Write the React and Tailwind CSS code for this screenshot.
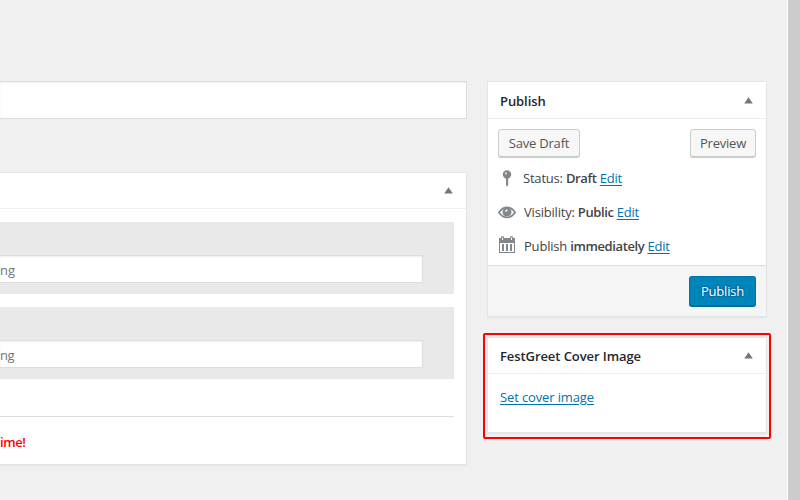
const box = "border border-[#e5e5e5] bg-white shadow-[0_1px_1px_rgba(0,0,0,0.04)]";
const input = "flex h-[28px] w-[423px] items-center border border-l-0 border-[#ddd] bg-white text-[13px] text-[#72777c] shadow-[inset_0_1px_2px_rgba(0,0,0,0.07)]";
const strong = "font-semibold tracking-[-0.4px]";

function Arrow() {
  return (
    <svg className="h-[7px] w-[9px]" viewBox="0 0 9 7" fill="#72777c">
      <path d="M4.5 0.3 8.8 6.4H.2Z" />
    </svg>
  );
}

function Head({ children, size }) {
  return (
    <div className={`flex items-center justify-between border-b border-[#eee] pr-[13px] pl-[12px] ${size}`}>
      <h2 className="mt-[1px] text-[13px] font-semibold tracking-[-0.08px] text-[#23282d]">{children}</h2>
      <Arrow />
    </div>
  );
}

function Pin() {
  return (
    <svg className="h-[17px] w-[17px]" viewBox="0 0 17 17" fill="#82878c">
      <circle cx="9" cy="4.5" r="4.2" />
      <path d="M8 8h2.2v6.2l-.7 2.3h-.8L8 14.2Z" />
      <circle cx="7.9" cy="3.4" r="1.1" fill="#d5d7d9" />
    </svg>
  );
}

function Eye() {
  return (
    <svg className="h-[17px] w-[18px]" viewBox="0 0 18 17" fill="none">
      <path d="M.9 8.5Q4.3 3.4 9 3.4t8.1 5.1Q13.7 13.4 9 13.4T.9 8.5Z" stroke="#82878c" strokeWidth="1.7" />
      <circle cx="9" cy="8" r="4.5" fill="#82878c" />
      <path d="M9.4 7.6V5.2A2.6 2.6 0 0 0 6.9 7.6Z" fill="#fff" />
    </svg>
  );
}

function Calendar() {
  return (
    <svg className="-mt-[3px] h-[17px] w-[17px]" viewBox="0 0 17 17">
      <path d="M1 2h16v15H1Z" fill="#82878c" />
      <path d="M2 7h14v9H2Z" fill="#fff" />
      <path d="M4 8h2v7H4zM8 8h2v7H8zM12 8h2v7h-2z" fill="#82878c" />
      <path d="M3 5V1.5a1.5 1.5 0 0 1 3 0V5ZM12 5V1.5a1.5 1.5 0 0 1 3 0V5Z" fill="#82878c" />
      <path d="M4 1.5h1V4H4zM13 1.5h1V4h-1z" fill="#fff" />
    </svg>
  );
}

function Edit() {
  return <a className="text-[#0073aa] underline underline-offset-2">Edit</a>;
}

export default function App() {
  return (
    <div className="flex h-[500px] w-[800px] overflow-hidden bg-[#f0f0f0] font-['Open_Sans','Noto_Sans',sans-serif] text-[13px] leading-[18px] tracking-[-0.2px] text-[#444]">
      <main className="w-[467px] pt-[81px]">
        <div className="h-[38px] border border-l-0 border-[#ddd] bg-white shadow-[inset_0_1px_2px_rgba(0,0,0,0.07)]" />
        <section className={`mt-[53px] h-[293px] border-l-0 ${box}`}>
          <div className="flex h-[36px] items-center justify-end border-b border-[#eee] pr-[13px]">
            <Arrow />
          </div>
          <div className="mt-[13px] h-[72px] w-[454px] bg-[#e9e9e9] pt-[33px]">
            <div className={input}><span className="mt-[2px] tracking-normal">ng</span></div>
          </div>
          <div className="mt-[13px] h-[72px] w-[454px] bg-[#e9e9e9] pt-[33px]">
            <div className={input}><span className="mt-[2px] tracking-[-0.5px]">ng</span></div>
          </div>
          <div className="mt-[37px] w-[454px] border-t border-[#ddd] pt-[16px]">
            <p className="font-semibold tracking-[-0.4px] text-[#f00]">ime!</p>
          </div>
        </section>
      </main>

      <aside className="ml-[16px] w-[288px] pt-[81px]">
        <section className={`mx-[4px] h-[236px] ${box}`}>
          <Head size="h-[37px]">Publish</Head>
          <div className="h-[146px] px-[10px] pt-[10px]">
            <div className="flex justify-between">
              <button className="h-[28px] w-[82px] rounded-[3px] border border-[#ccc] bg-[#f7f7f7] text-[#555] shadow-[0_1px_0_#ccc]">Save Draft</button>
              <button className="h-[28px] w-[66px] rounded-[3px] border border-[#ccc] bg-[#f7f7f7] text-[#555] shadow-[0_1px_0_#ccc]">Preview</button>
            </div>
            <div className="mt-[12px] flex h-[18px] items-center gap-[8px]"><Pin /><p>Status: <b className={strong}>Draft</b> <Edit /></p></div>
            <div className="mt-[16px] flex h-[18px] items-center gap-[8px]"><Eye /><p>Visibility: <b className={strong}>Public</b> <Edit /></p></div>
            <div className="mt-[16px] flex h-[18px] items-center gap-[9px]"><Calendar /><p>Publish <b className={strong}>immediately</b> <Edit /></p></div>
          </div>
          <div className="flex h-[51px] justify-end border-t border-[#ddd] bg-[#f5f5f5] pt-[10px] pr-[10px]">
            <button className="h-[30px] w-[67px] rounded-[3px] border border-[#0073aa] border-b-[#006799] bg-[#0085ba] text-white shadow-[0_1px_0_#006799] [text-shadow:0_-1px_1px_#006799,1px_0_1px_#006799,0_1px_1px_#006799,-1px_0_1px_#006799]">Publish</button>
          </div>
        </section>
        <div className="mt-[16px] h-[106px] rounded-[2px] border-2 border-[#f00] px-[2px] pt-[2px]">
          <section className={`h-[96px] ${box}`}>
            <Head size="h-[36px]">FestGreet Cover Image</Head>
            <a className="mt-[14px] ml-[12px] block w-fit tracking-[-0.13px] text-[#0073aa] underline underline-offset-2">Set cover image</a>
          </section>
        </div>
      </aside>
      <div className="ml-auto w-[13px] border-l border-white bg-[#ccc]" />
    </div>
  );
}
